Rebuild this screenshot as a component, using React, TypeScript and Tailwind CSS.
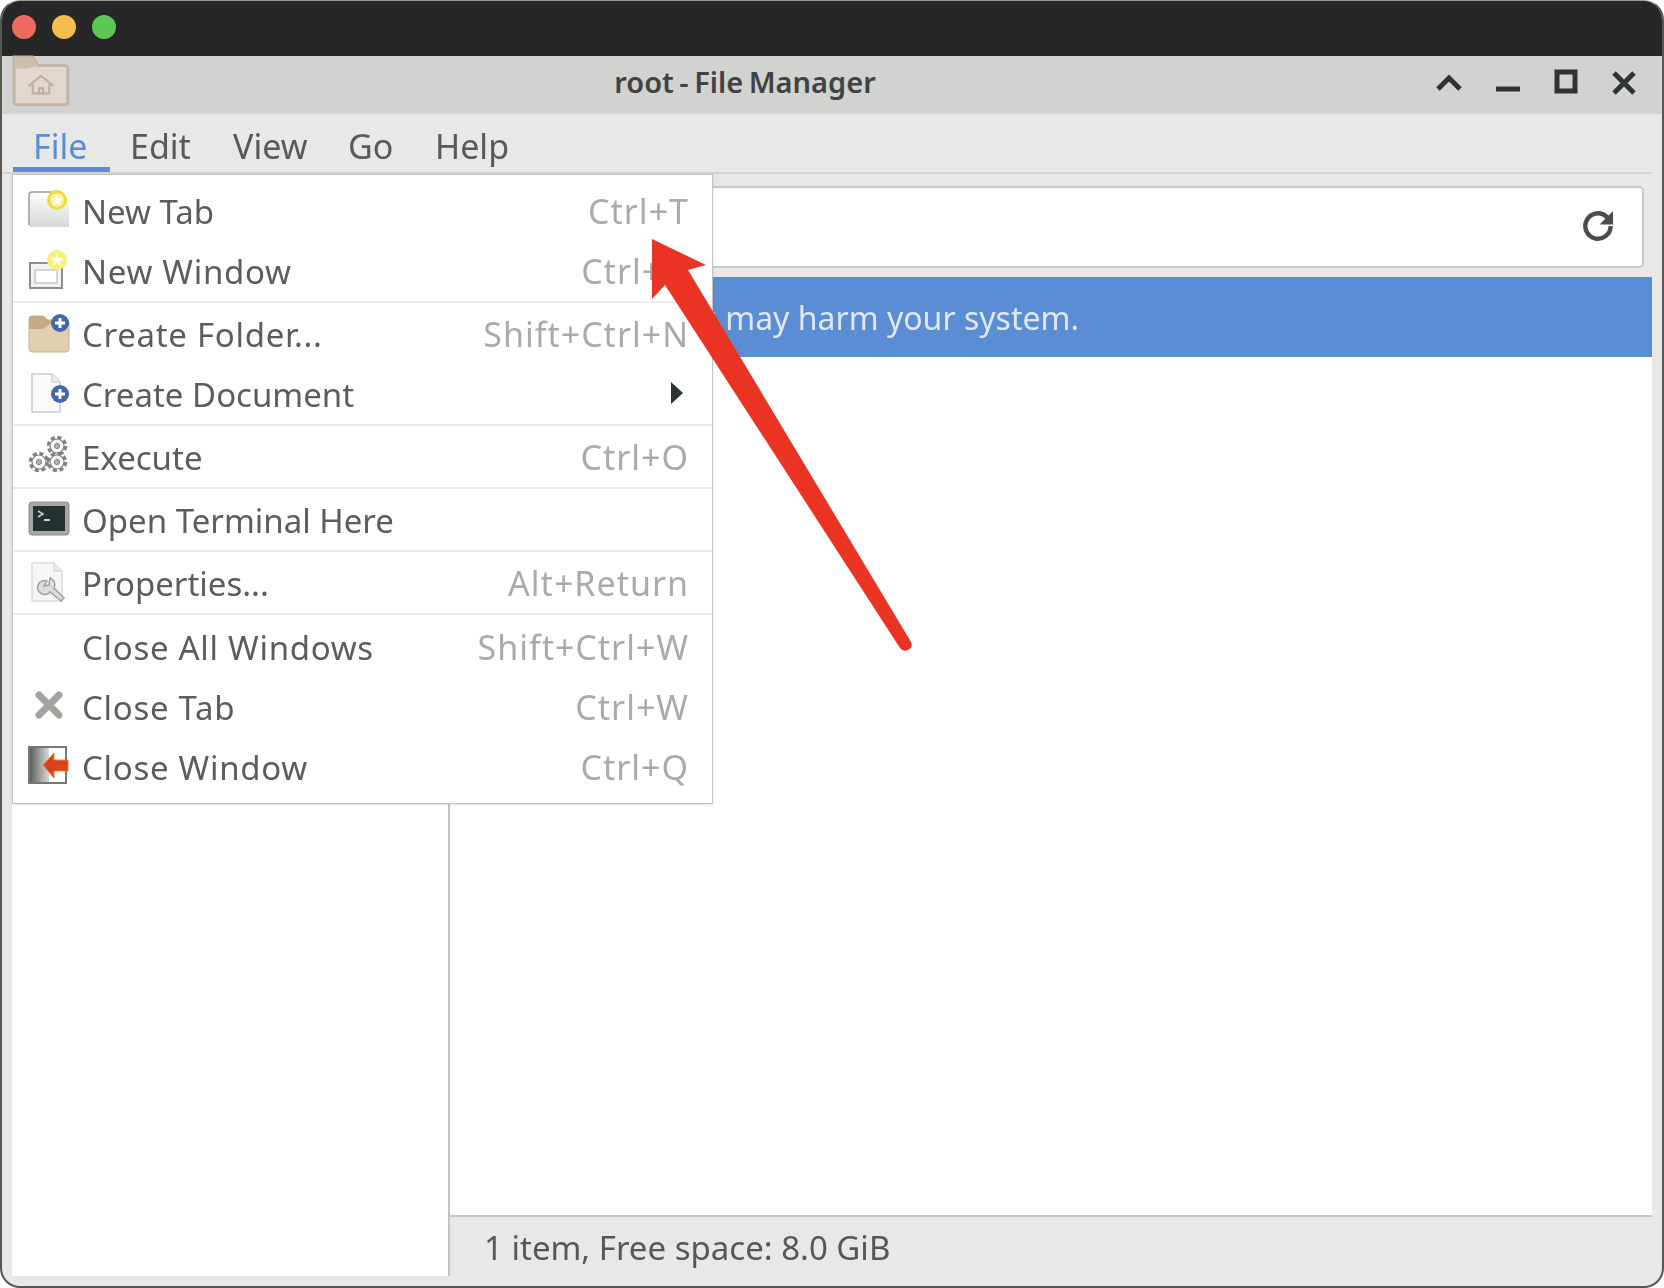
/**
 * Thunar "root - File Manager" window inside a mac-style frame, File menu open,
 * with a red annotation arrow over the menu.
 */
type MenuItem = { label: string; shortcut?: string; icon?: React.ReactNode; submenu?: boolean; wide?: boolean };

const Star = ({ fill }: { fill: string }) => (
  <path d="M29 4.500l2 4.200 4.500.6-3.200 3 .8 4.400-4.100-2.200-4.100 2.200.8-4.400-3.200-3 4.500-.6z" fill={fill} />
);

const NewTabIcon = () => (
  <svg width="44" height="44" viewBox="0 0 44 44">
    <defs>
      <linearGradient id="tab" x1="0" y1="0" x2="0" y2="1">
        <stop offset="0" stopColor="#ffffff" />
        <stop offset="1" stopColor="#d5d9d3" />
      </linearGradient>
    </defs>
    <path d="M1 38V6a3 3 0 0 1 3-3h37v35z" fill="url(#tab)" />
    <path d="M1 36V6a3 3 0 0 1 3-3h20" fill="none" stroke="#9a9a98" strokeWidth="1.500" />
    <circle cx="29" cy="11" r="10" fill="#ecdc3c" />
    <circle cx="29" cy="11" r="7" fill="#f6ee98" />
    <Star fill="#fffdf0" />
  </svg>
);

const NewWindowIcon = () => (
  <svg width="44" height="44" viewBox="0 0 44 44">
    <rect x="2" y="14" width="32" height="25" fill="#f2f2f0" stroke="#8d8d8b" strokeWidth="2" />
    <rect x="7" y="21" width="22" height="13" fill="#ffffff" stroke="#c8c8c6" strokeWidth="1.500" />
    <circle cx="29" cy="11" r="10" fill="#f7f078" />
    <Star fill="#fffde8" />
  </svg>
);

const PlusBadge = ({ cx, cy }: { cx: number; cy: number }) => (
  <g>
    <circle cx={cx} cy={cy} r="9" fill="#3f68ad" />
    <path d={`M${cx - 5} ${cy}h10M${cx} ${cy - 5}v10`} stroke="#ffffff" strokeWidth="3" />
  </g>
);

const CreateFolderIcon = () => (
  <svg width="44" height="44" viewBox="0 0 44 44">
    <path d="M1 7a3 3 0 0 1 3-3h11l4 4h19a3 3 0 0 1 3 3v26a3 3 0 0 1-3 3H4a3 3 0 0 1-3-3z" fill="#e1cfb2" stroke="#c7b394" strokeWidth="1" />
    <path d="M1 7a3 3 0 0 1 3-3h12l4 4 8 2-8 3-5 4H1z" fill="#c4ab86" />
    <PlusBadge cx={32} cy={11} />
  </svg>
);

const CreateDocIcon = () => (
  <svg width="44" height="44" viewBox="0 0 44 44">
    <path d="M4 2h20l8 8v30H4z" fill="#fafafa" stroke="#c9cbc7" strokeWidth="1.500" />
    <path d="M24 2v8h8" fill="#f0f0ee" stroke="#d5d5d3" strokeWidth="1.500" />
    <PlusBadge cx={32} cy={22} />
  </svg>
);

const Gear = ({ cx, cy }: { cx: number; cy: number }) => (
  <g>
    <circle cx={cx} cy={cy} r="8.500" fill="#ffffff" stroke="#7f817e" strokeWidth="3.500" strokeDasharray="4 2.700" />
    <circle cx={cx} cy={cy} r="7" fill="#ffffff" stroke="#7f817e" strokeWidth="1.200" />
    <circle cx={cx} cy={cy} r="2.600" fill="#b5b6b3" stroke="#7f817e" strokeWidth="1" />
  </g>
);

const ExecuteIcon = () => (
  <svg width="44" height="44" viewBox="0 0 44 44">
    <Gear cx={29} cy={11} />
    <Gear cx={11} cy={27} />
    <Gear cx={29} cy={27} />
  </svg>
);

const TerminalIcon = () => (
  <svg width="44" height="44" viewBox="0 0 44 44">
    <rect x="1" y="4" width="40" height="33" rx="3" fill="#a6a7a5" stroke="#8b8c8a" />
    <rect x="5" y="8" width="32" height="25" fill="#253030" />
    <path d="M10 13l5 3-5 3" fill="none" stroke="#c9d4d0" strokeWidth="1.500" />
    <path d="M16 22h6" stroke="#c9d4d0" strokeWidth="2" />
  </svg>
);

const PropertiesIcon = () => (
  <svg width="44" height="44" viewBox="0 0 44 44">
    <path d="M4 2h22l8 8v30H4z" fill="#f6f6f4" stroke="#d9dbd6" strokeWidth="1.500" />
    <path d="M26 2v8h8" fill="#ecebe8" stroke="#d9dbd6" strokeWidth="1.500" />
    <path d="M19 20a7 7 0 1 0 3 11l11 9 3-3-10-10a7 7 0 0 0-4-10l-1 7-5 1z" fill="#dcdcd8" stroke="#9fa19c" strokeWidth="1.500" />
  </svg>
);

const CloseTabIcon = () => (
  <svg width="44" height="44" viewBox="0 0 44 44">
    <path d="M11 10l20 20M31 10L11 30" stroke="#a2a59f" strokeWidth="7" strokeLinecap="round" />
  </svg>
);

const CloseWindowIcon = () => (
  <svg width="44" height="44" viewBox="0 0 44 44">
    <defs>
      <linearGradient id="door" x1="0" y1="0" x2="1" y2="0">
        <stop offset="0" stopColor="#5f5f5d" />
        <stop offset="1" stopColor="#d8d8d6" />
      </linearGradient>
    </defs>
    <rect x="1" y="2" width="37" height="36" fill="#ffffff" stroke="#777875" strokeWidth="2" />
    <path d="M2 3h19v34H2z" fill="url(#door)" />
    <path d="M15 20L26 8v7h14v11H26v7z" fill="#d9421b" stroke="#f07a3c" strokeWidth="1" />
  </svg>
);

const sections: MenuItem[][] = [
  [
    { label: "New Tab", shortcut: "Ctrl+T", icon: <NewTabIcon /> },
    { label: "New Window", shortcut: "Ctrl+N", icon: <NewWindowIcon />, wide: true },
  ],
  [
    { label: "Create Folder...", shortcut: "Shift+Ctrl+N", icon: <CreateFolderIcon />, wide: true },
    { label: "Create Document", icon: <CreateDocIcon />, submenu: true },
  ],
  [{ label: "Execute", shortcut: "Ctrl+O", icon: <ExecuteIcon /> }],
  [{ label: "Open Terminal Here", icon: <TerminalIcon /> }],
  [{ label: "Properties...", shortcut: "Alt+Return", icon: <PropertiesIcon /> }],
  [
    { label: "Close All Windows", shortcut: "Shift+Ctrl+W", wide: true },
    { label: "Close Tab", shortcut: "Ctrl+W", icon: <CloseTabIcon />, wide: true },
    { label: "Close Window", shortcut: "Ctrl+Q", icon: <CloseWindowIcon />, wide: true },
  ],
];

const menus = [
  { name: "File", cls: "ml-[1px] w-[97px] border-b-[5px] border-[#5b8dd6] pt-[10px] pl-[20px] text-[#5b8dd6]" },
  { name: "Edit", cls: "ml-[20px] w-[103px] pt-[5px] text-[#565a5c]" },
  { name: "View", cls: "w-[115px] pt-[5px] text-[#565a5c]" },
  { name: "Go", cls: "w-[87px] pt-[5px] text-[#565a5c]" },
  { name: "Help", cls: "w-[80px] pt-[5px] text-[#565a5c]" },
];

function FileMenu() {
  return (
    <div className="absolute top-[174px] left-[12px] w-[701px] border border-[#c4c4c2] bg-white pt-[6px] pb-[6px] text-[33px] shadow-sm blur-[0.6px]">
      {sections.map((items, i) => (
        <div
          key={i}
          className={i === 0 ? "" : i === 5 ? "border-t-2 border-[#ececea] pt-[2px]" : "border-t-2 border-[#ececea] pt-[1px]"}
        >
          {items.map((item) => (
            <div key={item.label} className="flex h-[60px] items-center pr-[23px] pl-[15px]">
              <div className="flex h-[44px] w-[44px] items-center justify-center">{item.icon}</div>
              <span className={item.wide ? "ml-[10px] flex-1 tracking-[0.7px] text-[#5a5d5e]" : "ml-[10px] flex-1 text-[#5a5d5e]"}>
                {item.label}
              </span>
              {item.shortcut && <span className="text-[34px] tracking-[1px] text-[#a9abaa]">{item.shortcut}</span>}
              {item.submenu && (
                <svg width="16" height="26" viewBox="0 0 16 26" className="-mt-[3px] mr-[4px]">
                  <path d="M2 2l12 11-12 11z" fill="#2e3436" />
                </svg>
              )}
            </div>
          ))}
        </div>
      ))}
    </div>
  );
}

export default function App() {
  return (
    <div className="relative h-[1288px] w-[1664px] overflow-hidden bg-white font-['Noto_Sans',sans-serif] text-[33px] leading-none">
      <div className="flex h-full flex-col overflow-hidden rounded-[20px] border-[2px] border-t-[1px] border-[#555753] border-t-[#9a9a9a] bg-[#e8e8e6] blur-[0.6px]">
        {/* mac traffic lights */}
        <div className="flex h-[55px] shrink-0 items-center gap-[16px] bg-[#272727] pb-[4px] pl-[10px]">
          <div className="h-[24px] w-[24px] rounded-full bg-[#ee6a5f]" />
          <div className="h-[24px] w-[24px] rounded-full bg-[#f5bd4f]" />
          <div className="h-[24px] w-[24px] rounded-full bg-[#5cc653]" />
        </div>

        {/* window title bar */}
        <div className="relative flex h-[58px] shrink-0 items-center justify-center bg-[#d2d2d0] pr-[174px] pb-[8px]">
          <svg width="60" height="54" viewBox="0 0 58 52" className="absolute -top-[1px] left-[9px]">
            <path d="M3 2h18l5 8h26a3 3 0 0 1 3 3v32a3 3 0 0 1-3 3H6a3 3 0 0 1-3-3z" fill="#e0d7cd" stroke="#c4b6a6" strokeWidth="3" />
            <path d="M3 2h18l5 8-9 3-14 0z" fill="#cdbfae" />
            <path d="M17 30l12-10 12 10M21 28v9h16v-9M27 37v-5h4v5" fill="none" stroke="#bdaf9f" strokeWidth="2" />
          </svg>
          <span className="text-[29px] font-semibold [word-spacing:-2px] text-[#3f4345]">root - File Manager</span>
          <div className="absolute top-0 right-0 h-full w-[240px]">
            <svg width="240" height="57" viewBox="0 0 240 57" fill="none" stroke="#2e3436" strokeWidth="5">
              <path d="M16 33l11-11 11 11" />
              <path d="M74 33h24" />
              <path d="M135 16h18v19h-18z" />
              <path d="M192 17l20 20M212 17l-20 20" />
            </svg>
          </div>
        </div>

        {/* menu bar */}
        <div className="mr-[10px] flex h-[60px] shrink-0 border-b-2 border-[#d4d4d2] pl-[10px]">
          {menus.map((m) => (
            <div key={m.name} className={`flex items-center text-[34px] ${m.cls}`}>
              {m.name}
            </div>
          ))}
        </div>

        <div className="flex min-h-0 flex-1 pr-[10px] pb-[10px] pl-[10px]">
          {/* side pane */}
          <div className="w-[438px] shrink-0 border-r-2 border-[#c4c4c2] bg-white" />

          {/* main pane */}
          <div className="flex min-w-0 flex-1 flex-col">
            <div className="shrink-0 pt-[12px] pr-[8px] pb-[9px]">
              <div className="flex h-[82px] items-center justify-end rounded-[5px] border-2 border-[#c8c8c6] bg-white pr-[25px] pb-[2px]">
                <svg width="38" height="38" viewBox="0 0 24 24" fill="none" stroke="#4a4e50" strokeWidth="2.800">
                  <path d="M20 12a8 8 0 1 1-2.500-5.800L20 8.500" />
                  <path d="M21.500 2.500v8.500h-8.500z" strokeWidth="0" fill="#4a4e50" />
                </svg>
              </div>
            </div>
            <div className="flex h-[80px] shrink-0 items-center justify-end overflow-hidden bg-[#5b8dd4] pt-[2px] pr-[573px] text-[32px] whitespace-nowrap text-[#dfe8f6]">
              You may harm your system.
            </div>
            <div className="min-h-0 flex-1 border-b-2 border-[#c4c4c2] bg-white" />
            <div className="flex h-[59px] shrink-0 items-center pt-[2px] pl-[34px] text-[#555859]">
              1 item, Free space: 8.0 GiB
            </div>
          </div>
        </div>
      </div>

      <FileMenu />

      {/* red annotation arrow */}
      <svg width="1664" height="1288" className="pointer-events-none absolute top-0 left-0">
        <path d="M652 239L706 265L688 270L911 642Q913 648 908 650Q903 652 900 648L665 285L652 299Z" fill="#ea3323" />
      </svg>
    </div>
  );
}
